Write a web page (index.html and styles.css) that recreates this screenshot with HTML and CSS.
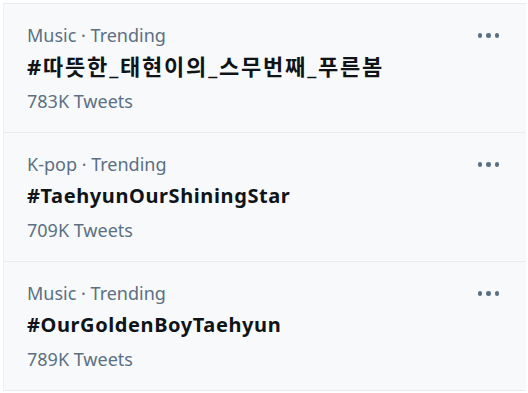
FILE: index.html
```html
<!DOCTYPE html>
<html>
  <head>
    <title>Trends</title>
    <link rel="stylesheet" href="styles.css">
  </head>
  <body>
    <div class="trends">
      <div class="trend">
        <div class="info">
          <div class="meta">Music · Trending</div>
          <div class="tag ko">#따뜻한_태현이의_스무번째_푸른봄</div>
          <div class="count">783K Tweets</div>
        </div>
        <div class="more"><span></span><span></span><span></span></div>
      </div>
      <div class="trend">
        <div class="info">
          <div class="meta">K-pop · Trending</div>
          <div class="tag">#TaehyunOurShiningStar</div>
          <div class="count">709K Tweets</div>
        </div>
        <div class="more"><span></span><span></span><span></span></div>
      </div>
      <div class="trend">
        <div class="info">
          <div class="meta">Music · Trending</div>
          <div class="tag">#OurGoldenBoyTaehyun</div>
          <div class="count">789K Tweets</div>
        </div>
        <div class="more"><span></span><span></span><span></span></div>
      </div>
    </div>
  </body>
</html>
```
FILE: styles.css
```css
body {
  margin: 0;
  background-color: #ffffff;
  font-family: "Noto Sans", "Noto Sans CJK KR", sans-serif;
}
.trends {
  margin: 3px 2px 0 3px;
  background-color: #f7f9fa;
  border-top: 1px solid #e6ecf0;
  border-left: 1px solid #eef1f3;
}
.trend {
  display: flex;
  justify-content: space-between;
  padding: 15px 27px 14px 23px;
  border-bottom: 1px solid #e6ecf0;
}
.info {
  display: flex;
  flex-direction: column;
}
.meta, .count {
  color: #5b7083;
  font-size: 18px;
  line-height: 33px;
}
.tag {
  color: #0f1419;
  font-size: 20px;
  font-weight: bold;
  letter-spacing: 0.6px;
  line-height: 33px;
  margin: -2px 0 2px;
}
.tag.ko {
  font-size: 22px;
  letter-spacing: 1.8px;
}
.more {
  display: flex;
  gap: 4px;
  padding-top: 14px;
}
.more span {
  width: 4.5px;
  height: 4.5px;
  border-radius: 50%;
  background-color: #5b7083;
}
```
